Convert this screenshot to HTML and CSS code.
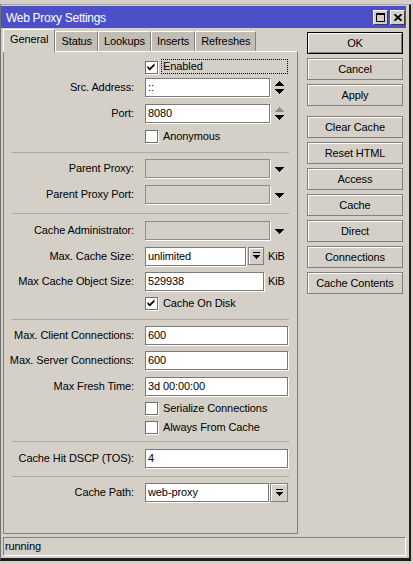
FILE: index.html
```html
<!DOCTYPE html>
<html>
<head>
<meta charset="utf-8">
<title>Web Proxy Settings</title>
<link rel="stylesheet" href="styles.css">
</head>
<body>
<div class="screen">
  <div class="window">
    <div class="titlebar">
      <span class="title">Web Proxy Settings</span>
      <div class="tb-buttons">
        <span class="tb-btn"><svg width="9" height="9" viewBox="0 0 9 9" shape-rendering="crispEdges"><rect x="0" y="0" width="9" height="2" fill="#000"/><rect x="0.5" y="0.5" width="8" height="8" fill="none" stroke="#000"/></svg></span>
        <span class="tb-btn"><svg width="8" height="7" viewBox="0 0 8 7"><path d="M0.5 0.2 L7.5 6.8 M7.5 0.2 L0.5 6.8" stroke="#000" stroke-width="1.8"/></svg></span>
      </div>
    </div>
    <div class="main">
      <div class="left">
        <div class="tabs">
          <span class="tab active">General</span>
          <span class="tab">Status</span>
          <span class="tab">Lookups</span>
          <span class="tab">Inserts</span>
          <span class="tab">Refreshes</span>
        </div>
        <div class="panel">
          <div class="check enabled">
            <span class="cb"><svg width="11" height="11" viewBox="0 0 11 11"><polygon points="1.5,3.8 3.8,6 8.5,1.3 8.5,3.8 3.8,8.5 1.5,6.2" fill="#000"/></svg></span>
            <span class="focus">Enabled</span>
          </div>
          <div class="row">
            <div class="lbl">Src. Address:</div>
            <div class="field w125">::</div>
            <svg class="spin" width="9" height="14" viewBox="0 0 9 14" shape-rendering="crispEdges"><polygon points="4.5,0 9,5 0,5" fill="#000"/><polygon points="0,8 9,8 4.5,13" fill="#000"/></svg>
          </div>
          <div class="row">
            <div class="lbl">Port:</div>
            <div class="field w125">8080</div>
            <svg class="spin" width="9" height="14" viewBox="0 0 9 14" shape-rendering="crispEdges"><polygon points="4.5,0 9,5 0,5" fill="#8c8c8c"/><polygon points="0,8 9,8 4.5,13" fill="#000"/></svg>
          </div>
          <div class="check">
            <span class="cb"></span>
            <span class="ctext">Anonymous</span>
          </div>
          <div class="sep"></div>
          <div class="row">
            <div class="lbl">Parent Proxy:</div>
            <div class="field w125 disabled"></div>
            <svg class="dd" width="9" height="5" viewBox="0 0 9 5" shape-rendering="crispEdges"><polygon points="0,0 9,0 4.5,5" fill="#000"/></svg>
          </div>
          <div class="row">
            <div class="lbl">Parent Proxy Port:</div>
            <div class="field w125 disabled"></div>
            <svg class="dd" width="9" height="5" viewBox="0 0 9 5" shape-rendering="crispEdges"><polygon points="0,0 9,0 4.5,5" fill="#000"/></svg>
          </div>
          <div class="sep sep-b"></div>
          <div class="row">
            <div class="lbl">Cache Administrator:</div>
            <div class="field w125 disabled"></div>
            <svg class="dd" width="9" height="5" viewBox="0 0 9 5" shape-rendering="crispEdges"><polygon points="0,0 9,0 4.5,5" fill="#000"/></svg>
          </div>
          <div class="row r25">
            <div class="lbl">Max. Cache Size:</div>
            <div class="field w101">unlimited</div>
            <span class="ddbtn"><svg width="7" height="8" viewBox="0 0 7 8" shape-rendering="crispEdges"><rect x="0" y="0" width="7" height="1" fill="#000"/><polygon points="0,3 7,3 3.5,7" fill="#000"/></svg></span>
            <span class="unit">KiB</span>
          </div>
          <div class="row r25">
            <div class="lbl">Max Cache Object Size:</div>
            <div class="field w119">529938</div>
            <span class="unit">KiB</span>
          </div>
          <div class="check">
            <span class="cb"><svg width="11" height="11" viewBox="0 0 11 11"><polygon points="1.5,3.8 3.8,6 8.5,1.3 8.5,3.8 3.8,8.5 1.5,6.2" fill="#000"/></svg></span>
            <span class="ctext">Cache On Disk</span>
          </div>
          <div class="sep"></div>
          <div class="row r25">
            <div class="lbl">Max. Client Connections:</div>
            <div class="field w143">600</div>
          </div>
          <div class="row">
            <div class="lbl">Max. Server Connections:</div>
            <div class="field w143">600</div>
          </div>
          <div class="row r25">
            <div class="lbl">Max Fresh Time:</div>
            <div class="field w143">3d 00:00:00</div>
          </div>
          <div class="check">
            <span class="cb"></span>
            <span class="ctext">Serialize Connections</span>
          </div>
          <div class="check">
            <span class="cb"></span>
            <span class="ctext">Always From Cache</span>
          </div>
          <div class="sep sep-c"></div>
          <div class="row">
            <div class="lbl">Cache Hit DSCP (TOS):</div>
            <div class="field w143">4</div>
          </div>
          <div class="sep sep-d"></div>
          <div class="row">
            <div class="lbl">Cache Path:</div>
            <div class="field w124">web-proxy</div>
            <span class="ddbtn wide"><svg width="7" height="8" viewBox="0 0 7 8" shape-rendering="crispEdges"><rect x="0" y="0" width="7" height="1" fill="#000"/><polygon points="0,3 7,3 3.5,7" fill="#000"/></svg></span>
          </div>
        </div>
      </div>
      <div class="side">
        <div class="btn default">OK</div>
        <div class="btn">Cancel</div>
        <div class="btn gap">Apply</div>
        <div class="btn">Clear Cache</div>
        <div class="btn">Reset HTML</div>
        <div class="btn">Access</div>
        <div class="btn">Cache</div>
        <div class="btn">Direct</div>
        <div class="btn">Connections</div>
        <div class="btn">Cache Contents</div>
      </div>
    </div>
    <div class="statusbar">running</div>
  </div>
</div>
</body>
</html>
```

FILE: styles.css
```css
* { box-sizing: border-box; }
html, body { margin: 0; padding: 0; }
body {
  width: 413px;
  height: 564px;
  overflow: hidden;
  background: #d4d0c8;
  font-family: "Liberation Sans", Arial, sans-serif;
  font-size: 11px;
  letter-spacing: -0.1px;
  color: #000;
}
.screen { padding-top: 4px; }
.window {
  width: 411px;
  background: #d4d0c8;
  border-top: 1px solid #a8a49c;
  padding-top: 1px;
  border-left: 1px solid #707070;
  border-right: 2px solid #1c1c1c;
  padding-right: 3px;
  border-bottom: 3px solid #1c1c1c;
  padding-bottom: 2px;
}
.titlebar {
  height: 22px;
  background: #4c4fc9;
  color: #fff;
  display: flex;
  align-items: center;
  padding: 0 1px 0 5px;
}
.title { font-size: 12px; letter-spacing: -0.3px; padding-top: 1px; }
.tb-buttons { margin-left: auto; display: flex; gap: 2px; }
.tb-btn {
  width: 15px;
  height: 15px;
  background: #d4d0c8;
  border: 1px solid;
  border-color: #fff #404040 #404040 #fff;
  display: flex;
  align-items: center;
  justify-content: center;
}
.main { display: flex; }
.left { margin-left: 2px; width: 295px; }
.tabs {
  display: flex;
  align-items: flex-end;
  height: 23px;
  padding-top: 1px;
}
.tab {
  height: 20px;
  line-height: 19px;
  padding: 0 5px;
  background: #c2beb6;
  border-top: 1px solid #fff;
  border-left: 1px solid #fff;
  border-right: 1px solid #808080;
  white-space: nowrap;
}
.tab.active {
  position: relative;
  z-index: 1;
  height: 23px;
  margin-bottom: -1px;
  line-height: 19px;
  padding: 0 6px 0 6px;
  background: #d4d0c8;
}
.panel {
  height: 483px;
  border: 1px solid #808080;
  border-top-color: #fff;
  padding-top: 6px;
}
.row {
  display: flex;
  align-items: flex-start;
  height: 26px;
  padding-top: 3px;
}
.row.r25 { height: 25px; }
.lbl {
  width: 130px;
  margin-right: 11px;
  text-align: right;
  line-height: 19px;
  white-space: nowrap;
}
.field {
  height: 19px;
  border: 1px solid #7a7a7a;
  box-shadow: 1px 1px 0 #fff;
  background: #fff;
  padding-left: 2px;
  line-height: 17px;
  white-space: nowrap;
}
.field.disabled { background: #d4d0c8; border-color: #8c8c8c; }
.w101 { width: 101px; }
.w119 { width: 119px; }
.w124 { width: 124px; }
.w125 { width: 125px; }
.w143 { width: 143px; }
.spin { margin-left: 5px; margin-top: 3px; }
.dd { margin-left: 5px; margin-top: 8px; }
.ddbtn {
  width: 16px;
  height: 18px;
  margin-left: 2px;
  border: 1px solid #808080;
  box-shadow: inset 1px 1px 0 #fff;
  background: #d4d0c8;
  display: flex;
  align-items: center;
  justify-content: center;
}
.ddbtn.wide { width: 18px; height: 19px; margin-left: 1px; }
.unit { margin-left: 4px; line-height: 19px; }
.check {
  display: flex;
  align-items: flex-start;
  height: 19px;
  padding-top: 3px;
  padding-left: 141px;
}
.check.enabled { height: 17px; }
.cb {
  width: 13px;
  height: 13px;
  border: 1px solid #707070;
  box-shadow: 1px 1px 0 #fff;
  background: #fff;
  display: flex;
}
.ctext { margin-left: 5px; line-height: 13px; }
.focus {
  margin-left: 3px;
  margin-top: -2px;
  width: 127px;
  height: 15px;
  border: 1px dotted #000;
  padding-left: 1px;
  line-height: 13px;
}
.sep {
  height: 1px;
  background: #aca89f;
  margin: 6px 8px 3px 8px;
}
.sep.sep-b { margin-top: 5px; margin-bottom: 4px; }
.sep.sep-c { margin-top: 4px; margin-bottom: 4px; }
.sep.sep-d { margin-top: 4px; margin-bottom: 3px; }
.side {
  margin-left: 9px;
  width: 96px;
  padding-top: 4px;
}
.btn {
  height: 22px;
  margin-bottom: 4px;
  border: 1px solid #808080;
  box-shadow: inset 1px 1px 0 #fff;
  display: flex;
  align-items: center;
  justify-content: center;
  white-space: nowrap;
}
.btn.default {
  border-color: #000;
  box-shadow: inset 1px 1px 0 #fff, inset -1px -1px 0 #808080;
}
.btn.gap { margin-bottom: 10px; }
.statusbar {
  margin: 3px 0 0 2px;
  width: 403px;
  height: 19px;
  border: 1px solid;
  border-color: #808080 #fff #fff #808080;
  line-height: 17px;
  padding-left: 1px;
}
```
